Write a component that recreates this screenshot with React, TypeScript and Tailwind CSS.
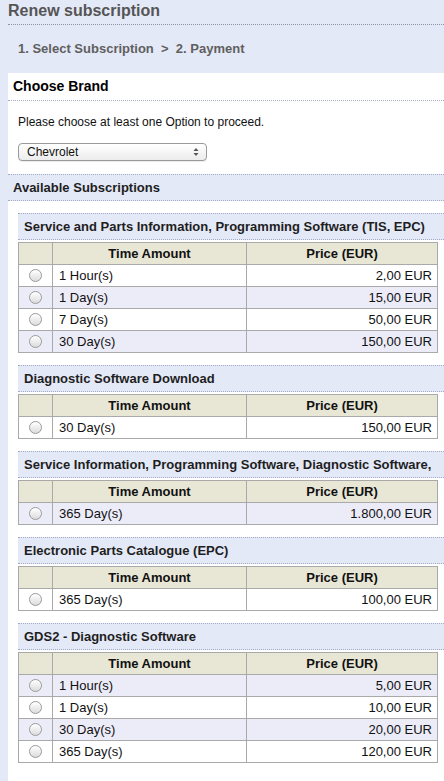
type Row = { time: string; price: string; alt: boolean };

type Plan = { title: string; rows: Row[] };

const plans: Plan[] = [
  {
    title: "Service and Parts Information, Programming Software (TIS, EPC)",
    rows: [
      { time: "1 Hour(s)", price: "2,00 EUR", alt: false },
      { time: "1 Day(s)", price: "15,00 EUR", alt: true },
      { time: "7 Day(s)", price: "50,00 EUR", alt: false },
      { time: "30 Day(s)", price: "150,00 EUR", alt: true },
    ],
  },
  {
    title: "Diagnostic Software Download",
    rows: [{ time: "30 Day(s)", price: "150,00 EUR", alt: false }],
  },
  {
    title: "Service Information, Programming Software, Diagnostic Software,",
    rows: [{ time: "365 Day(s)", price: "1.800,00 EUR", alt: true }],
  },
  {
    title: "Electronic Parts Catalogue (EPC)",
    rows: [{ time: "365 Day(s)", price: "100,00 EUR", alt: false }],
  },
  {
    title: "GDS2 - Diagnostic Software",
    rows: [
      { time: "1 Hour(s)", price: "5,00 EUR", alt: true },
      { time: "1 Day(s)", price: "10,00 EUR", alt: false },
      { time: "30 Day(s)", price: "20,00 EUR", alt: true },
      { time: "365 Day(s)", price: "120,00 EUR", alt: false },
    ],
  },
];

function Radio() {
  return (
    <span className="mx-auto block h-[13px] w-[13px] rounded-full border border-[#9a9a9a] bg-linear-to-b from-white to-[#dcdcdc] shadow-[inset_0_1px_1px_rgba(255,255,255,0.9)]" />
  );
}

function PlanSection({ plan }: { plan: Plan }) {
  return (
    <div className="mb-[12px]">
      <div className="flex h-[27px] items-center whitespace-nowrap border-y border-dotted border-[#a3abc4] bg-[#e4e9f7] pl-[6px] text-[13px] font-bold text-[#1e1e1e]">
        {plan.title}
      </div>

      <table className="mt-[2px] w-[419px] table-fixed border-collapse text-[13px] text-[#111]">
        <colgroup>
          <col className="w-[34px]" />
          <col className="w-[194px]" />
          <col className="w-[191px]" />
        </colgroup>
        <thead>
          <tr className="bg-[#e8e7d6]">
            <th className="h-[22px] border border-[#a9a9a9] p-0" />
            <th className="h-[22px] border border-[#a9a9a9] p-0 text-center font-bold">
              Time Amount
            </th>
            <th className="h-[22px] border border-[#a9a9a9] p-0 text-center font-bold">
              Price (EUR)
            </th>
          </tr>
        </thead>
        <tbody>
          {plan.rows.map((row) => (
            <tr
              key={row.time}
              className={row.alt ? "bg-[#ececf9]" : "bg-white"}
            >
              <td className="h-[22px] border border-[#a9a9a9] p-0">
                <Radio />
              </td>
              <td className="h-[22px] border border-[#a9a9a9] py-0 pl-[6px]">
                {row.time}
              </td>
              <td className="h-[22px] border border-[#a9a9a9] py-0 pr-[5px] text-right">
                {row.price}
              </td>
            </tr>
          ))}
        </tbody>
      </table>
    </div>
  );
}

export default function App() {
  return (
    <main className="min-h-screen w-[444px] overflow-hidden bg-[#e4e9f7] pl-[8px] font-['Liberation_Sans',Arial,sans-serif]">
      <div className="flex h-[25px] items-center border-b border-dotted border-[#8c94a8] pb-[2px] text-[16px] font-bold text-[#555]">
        Renew subscription
      </div>

      <div className="flex h-[48px] items-center pl-[10px] text-[13px] font-bold text-[#5f5f5f]">
        1. Select Subscription&nbsp;&nbsp;&gt;&nbsp;&nbsp;2. Payment
      </div>

      <section className="min-h-[708px] w-[600px] bg-white">
        <div className="flex h-[28px] items-center border-b border-dotted border-[#a3abc4] pl-[5px] text-[14px] font-bold text-black">
          Choose Brand
        </div>

        <div className="pl-[10px] pt-[14px] pb-[13px]">
          <p className="text-[12px] leading-[15px] text-[#111]">
            Please choose at least one Option to proceed.
          </p>
          <div className="mt-[13px] flex h-[18px] w-[189px] items-center justify-between rounded-[4px] border border-[#9a9a9a] bg-linear-to-b from-white to-[#ececec] pl-[8px] pr-[7px] text-[12px] text-[#111] shadow-[0_1px_0_rgba(0,0,0,0.08)]">
            <span>Chevrolet</span>
            <svg width="6" height="10" viewBox="0 0 6 10" className="text-[#555]">
              <path d="M0.5 4 L3 1 L5.5 4 Z" fill="currentColor" />
              <path d="M0.5 6 L3 9 L5.5 6 Z" fill="currentColor" />
            </svg>
          </div>
        </div>

        <div className="flex h-[27px] items-center border-y border-dotted border-[#a3abc4] bg-[#e4e9f7] pl-[5px] text-[13px] font-bold text-[#1e1e1e]">
          Available Subscriptions
        </div>

        <div className="pl-[10px] pt-[12px]">
          {plans.map((plan) => (
            <PlanSection key={plan.title} plan={plan} />
          ))}
        </div>
      </section>
    </main>
  );
}
